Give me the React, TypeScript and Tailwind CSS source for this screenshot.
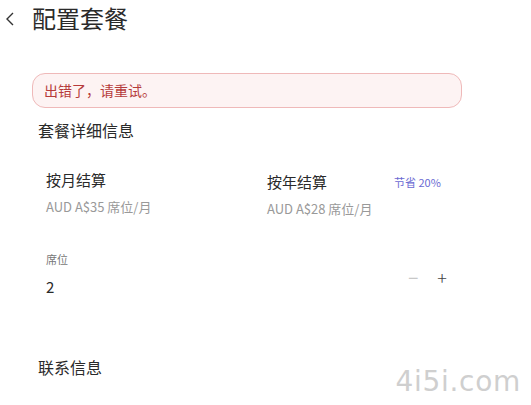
import React from 'react';

const font = { fontFamily: '"Noto Sans CJK SC", "Noto Sans", sans-serif' };

const Plan = ({ name, price, badge }: { name: string; price: string; badge?: string }) => (
  <div className="flex flex-col">
    <div className="flex items-center h-[22px]">
      <span className="text-[15px] text-[#2a2a2a] w-[127px]">{name}</span>
      {badge && <span className="text-[11px] text-[#6a6ad2]">{badge}</span>}
    </div>
    <div className="mt-[6px] text-[13px] text-[#999]">{price}</div>
  </div>
);

export default function App() {
  return (
    <div className="w-[531px] h-[405px] bg-white relative overflow-hidden" style={font}>
      {/* header */}
      <div className="flex items-center h-[36px] pl-[5px]">
        <svg width="10" height="14" viewBox="0 0 10 14" className="mt-[2px]">
          <path d="M8 1 L2 7 L8 13" fill="none" stroke="#333" strokeWidth="1.4" />
        </svg>
        <h1 className="ml-[17px] text-[24px] leading-none text-[#2a2a2a]">配置套餐</h1>
      </div>

      {/* error */}
      <div className="ml-[32px] mt-[37px] w-[430px] h-[35px] rounded-[13px] border border-[#efb9b9] bg-[#fdf3f3] flex items-center pl-[11px]">
        <span className="text-[14px] text-[#b63b3b]">出错了，请重试。</span>
      </div>

      <div className="ml-[38px] mt-[9px] text-[16px] text-[#2a2a2a] leading-[26px]">套餐详细信息</div>

      {/* plans */}
      <div className="grid grid-cols-[221px_200px] ml-[46px] mt-[26px]">
        <Plan name="按月结算" price="AUD A$35 席位/月" />
        <div className="mt-[2px]">
          <Plan name="按年结算" price="AUD A$28 席位/月" badge="节省 20%" />
        </div>
      </div>

      {/* seats */}
      <div className="flex items-start ml-[46px] mt-[32px] w-[401px]">
        <div className="flex flex-col">
          <span className="text-[11px] text-[#777] leading-[16px]">席位</span>
          <span className="mt-[10px] text-[15px] text-[#2a2a2a] leading-[20px]">2</span>
        </div>
        <div className="ml-auto mt-[17px] flex items-center gap-[19px]">
          <span className="text-[18px] text-[#c8c8c8] leading-none">−</span>
          <span className="text-[18px] text-[#444] font-light leading-none">+</span>
        </div>
      </div>

      <div className="ml-[38px] mt-[57px] text-[16px] text-[#2a2a2a] leading-[26px]">联系信息</div>

      <div className="absolute right-[10px] bottom-[2px] text-[28px] text-[#cfcfcf] tracking-wide" style={{ fontFamily: '"DejaVu Sans", sans-serif' }}>
        4i5i.com
      </div>
    </div>
  );
}
